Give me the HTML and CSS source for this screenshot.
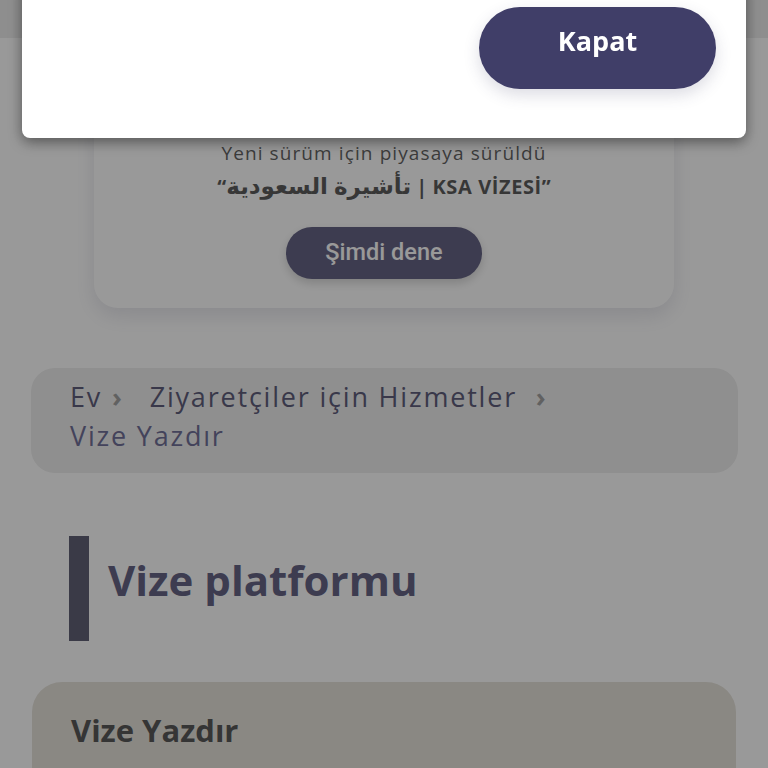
FILE: index.html
```html
<!DOCTYPE html>
<html lang="tr">
<head>
<meta charset="UTF-8">
<meta name="viewport" content="width=device-width, initial-scale=1.0">
<title>Vize Yazdır</title>
<link rel="stylesheet" href="styles.css">
</head>
<body>
<div class="header"></div>
<div class="content">
    <div class="promo">
        <div class="promo-line">Yeni sürüm için piyasaya sürüldü</div>
        <div class="promo-title">“<span class="ar">تأشيرة السعودية</span> <span class="lat">| KSA VİZESİ</span>”</div>
        <button class="try-now">Şimdi dene</button>
    </div>

    <div class="breadcrumb">
        <span class="crumb">Ev</span><span class="sep">›</span>
        <span class="crumb">Ziyaretçiler için Hizmetler</span> <span class="sep">›</span>
        <span class="crumb current">Vize Yazdır</span>
    </div>

    <h1 class="section-title">Vize platformu</h1>

    <div class="service-card">
        <h2>Vize Yazdır</h2>
    </div>
</div>

<div class="overlay"></div>
<div class="dialog">
    <button class="close">Kapat</button>
</div>
</body>
</html>
```

FILE: styles.css
```css
body, html {
    margin: 0;
    font-family: "Open Sans", "DejaVu Sans", sans-serif;
    background-color: #fff;
    height: 100%;
    overflow: hidden;
}

.header {
    height: 38px;
    background-color: #e9e9e9;
}

.content {
    padding-top: 20px;
}

.promo {
    margin: 0 94px;
    padding: 82px 20px 29px;
    background: #fff;
    border-radius: 24px;
    box-shadow: 0 8px 20px rgba(63, 61, 102, 0.16);
    text-align: center;
}

.promo-line {
    font-size: 19px;
    line-height: 26px;
    letter-spacing: 1.1px;
    color: #3c3c3c;
}

.promo-title {
    margin-top: 4px;
    font-size: 20px;
    line-height: 30px;
    font-weight: bold;
    color: #333;
}

.promo-title .ar {
    font-size: 23px;
}

.promo-title .lat {
    letter-spacing: 0.6px;
}

.try-now {
    margin-top: 25px;
    width: 196px;
    height: 52px;
    padding-bottom: 4px;
    border: none;
    border-radius: 26px;
    background-color: #3f3d66;
    color: #fff;
    font-family: Roboto, "Liberation Sans", sans-serif;
    font-size: 23.5px;
    font-weight: 500;
    box-shadow: 0 4px 10px rgba(0, 0, 0, 0.2);
}

.breadcrumb {
    margin: 60px 30px 0 31px;
    padding: 9px 39px 18px;
    background-color: #eaeaea;
    border-radius: 24px;
    font-size: 27px;
    line-height: 39px;
    letter-spacing: 1.8px;
    color: #37365a;
}

.breadcrumb .crumb {
    white-space: nowrap;
}

.breadcrumb .sep {
    color: #8a8a8a;
    font-weight: bold;
    margin: 0 17px 0 10px;
}

.breadcrumb .current {
    color: #4d4b7e;
}

.section-title {
    margin: 63px 0 0 69px;
    min-height: 50px;
    padding: 19px 0 36px 19px;
    border-left: 20px solid #3a3a55;
    font-size: 42px;
    line-height: 50px;
    font-weight: bold;
    color: #3f3d66;
}

.service-card {
    margin: 41px 32px 0;
    padding: 29px 39px;
    background-color: #e0dcd2;
    border-radius: 30px;
    height: 200px;
}

.service-card h2 {
    margin: 0;
    font-size: 31px;
    line-height: 38px;
    color: #2f2f2f;
}

/* modal layer */
.overlay {
    position: fixed;
    inset: 0;
    background-color: rgba(60, 60, 60, 0.52);
}

.dialog {
    position: fixed;
    top: -20px;
    left: 22px;
    width: 724px;
    height: 158px;
    box-sizing: border-box;
    padding: 27px 30px 0;
    display: flex;
    justify-content: flex-end;
    align-items: flex-start;
    background: #fff;
    border-radius: 8px;
    box-shadow: 0 4px 14px rgba(0, 0, 0, 0.45);
}

.close {
    width: 237px;
    height: 82px;
    padding-bottom: 16px;
    border: none;
    border-radius: 41px;
    background-color: #403e68;
    color: #fff;
    font-family: "Open Sans", sans-serif;
    font-size: 27px;
    font-weight: bold;
    box-shadow: 0 6px 16px rgba(63, 61, 102, 0.18);
}
```
